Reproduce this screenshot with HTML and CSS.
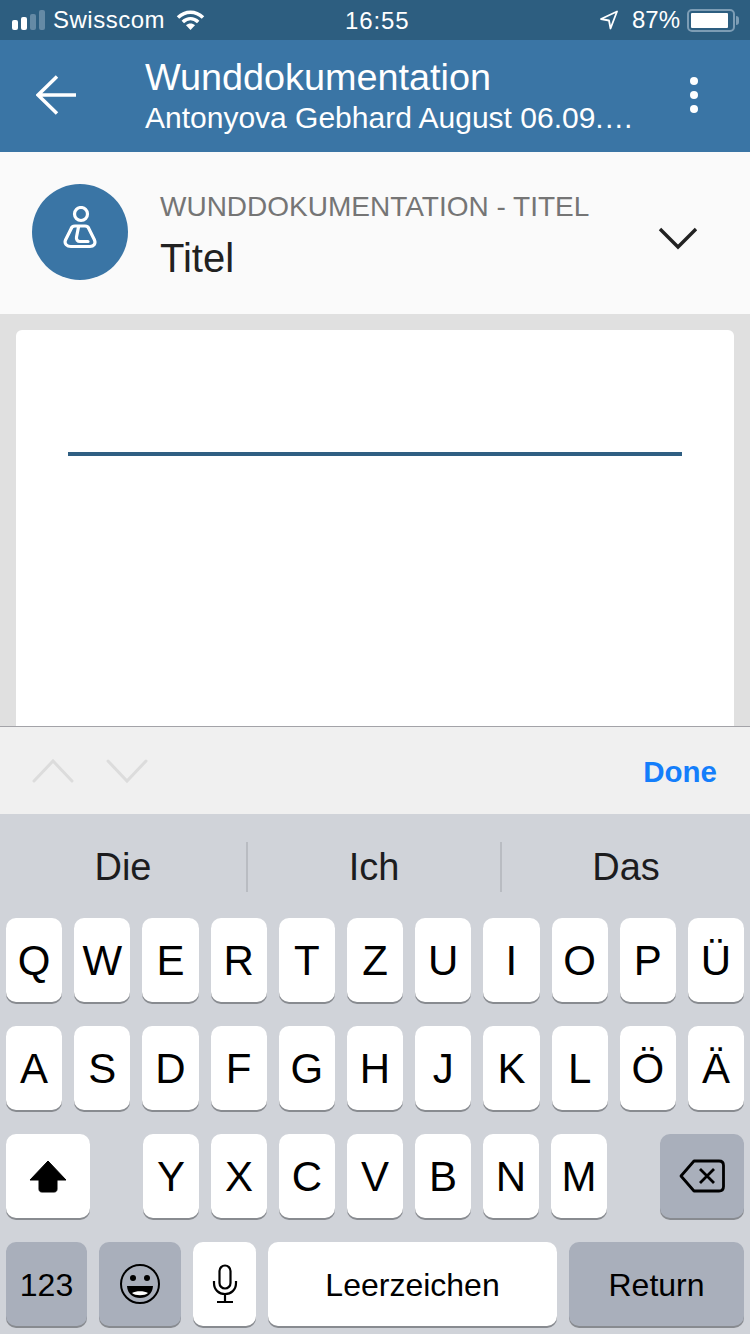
FILE: index.html
```html
<!DOCTYPE html>
<html lang="de">
<head>
    <meta charset="UTF-8">
    <meta name="viewport" content="width=device-width, initial-scale=1.0">
    <title>Wunddokumentation</title>
    <link rel="stylesheet" href="styles.css">
</head>
<body>
    <div class="status-bar">
        <div class="status-left">
            <div class="signal">
                <span class="bar bar-1 on"></span>
                <span class="bar bar-2 on"></span>
                <span class="bar bar-3"></span>
                <span class="bar bar-4"></span>
            </div>
            <span class="carrier">Swisscom</span>
            <svg class="wifi" width="29" height="22" viewBox="0 0 29 22">
                <path d="M2 8.500C9.500 1.500 19.500 1.500 27 8.500" fill="none" stroke="#fff" stroke-width="3.600"/>
                <path d="M6.800 13C11.500 8.700 17.500 8.700 22.200 13" fill="none" stroke="#fff" stroke-width="3.600"/>
                <path d="M10 16.300C12.500 14 16.500 14 19 16.300L14.500 21Z" fill="#fff"/>
            </svg>
        </div>
        <div class="status-time">16:55</div>
        <div class="status-right">
            <svg class="location" width="18" height="20" viewBox="0 0 18 20">
                <path d="M1 9L17 1.500L10.500 18.500L9 10.500Z" fill="none" stroke="#fff" stroke-width="1.800" stroke-linejoin="round"/>
            </svg>
            <span class="battery-text">87%</span>
            <div class="battery"><div class="battery-level"></div></div>
            <div class="battery-tip"></div>
        </div>
    </div>

    <header class="app-bar">
        <svg class="back" width="42" height="40" viewBox="0 0 42 40">
            <path d="M2 20H40M21 1.500L2 20L21 38.500" fill="none" stroke="#fff" stroke-width="3.500"/>
        </svg>
        <div class="app-titles">
            <div class="app-title">Wunddokumentation</div>
            <div class="app-subtitle">Antonyova Gebhard August 06.09.…</div>
        </div>
        <div class="more">
            <span class="dot"></span>
            <span class="dot"></span>
            <span class="dot"></span>
        </div>
    </header>

    <section class="section-head">
        <div class="avatar">
            <svg class="avatar-icon" width="34" height="44" viewBox="0 0 34 44">
                <circle cx="18" cy="8" r="6.500" fill="none" stroke="#fff" stroke-width="3.200"/>
                <path d="M12 20H22C24.500 20 25.500 21 26 23L31.500 34C33 38 30.500 40.500 27 40.500H8C4 40.500 1 38 2.500 34L8 23C8.500 21 9.500 20 12 20Z" fill="none" stroke="#fff" stroke-width="3.200" stroke-linejoin="round"/>
                <path d="M15.500 21L13.500 31C13 33.500 14.500 35.500 17 35.500H25" fill="none" stroke="#fff" stroke-width="3.200" stroke-linecap="round"/>
            </svg>
        </div>
        <div class="section-text">
            <div class="section-label">WUNDDOKUMENTATION - TITEL</div>
            <div class="section-value">Titel</div>
        </div>
        <svg class="chevron" width="40" height="24" viewBox="0 0 40 24">
            <path d="M2 3L20 21L38 3" fill="none" stroke="#222" stroke-width="3.400"/>
        </svg>
    </section>

    <main class="content">
        <div class="card">
            <div class="field-line"></div>
        </div>
    </main>

    <div class="toolbar">
        <svg class="nav-arrow" width="42" height="26" viewBox="0 0 42 26">
            <path d="M2 23L21 3L40 23" fill="none" stroke="#dcdcdc" stroke-width="3" stroke-linecap="round"/>
        </svg>
        <svg class="nav-arrow" width="42" height="26" viewBox="0 0 42 26">
            <path d="M2 3L21 23L40 3" fill="none" stroke="#dcdcdc" stroke-width="3" stroke-linecap="round"/>
        </svg>
        <span class="done">Done</span>
    </div>

    <div class="keyboard">
        <div class="suggestions">
            <span class="suggestion suggestion-first">Die</span>
            <span class="suggestion suggestion-mid">Ich</span>
            <span class="suggestion">Das</span>
        </div>
        <div class="key-row">
            <div class="key">Q</div><div class="key">W</div><div class="key">E</div><div class="key">R</div><div class="key">T</div><div class="key">Z</div><div class="key">U</div><div class="key">I</div><div class="key">O</div><div class="key">P</div><div class="key">Ü</div>
        </div>
        <div class="key-row">
            <div class="key">A</div><div class="key">S</div><div class="key">D</div><div class="key">F</div><div class="key">G</div><div class="key">H</div><div class="key">J</div><div class="key">K</div><div class="key">L</div><div class="key">Ö</div><div class="key">Ä</div>
        </div>
        <div class="key-row row-3">
            <div class="key key-shift">
                <svg width="38" height="33" viewBox="0 0 38 33">
                    <path d="M19 1L37 20H28V29C28 31 27 32 25 32H13C11 32 10 31 10 29V20H1Z" fill="#000" stroke="#000" stroke-linejoin="round"/>
                </svg>
            </div>
            <div class="letters">
                <div class="key">Y</div><div class="key">X</div><div class="key">C</div><div class="key">V</div><div class="key">B</div><div class="key">N</div><div class="key">M</div>
            </div>
            <div class="key key-dark key-back">
                <svg width="46" height="34" viewBox="0 0 46 34">
                    <path d="M15 2H40C43 2 44.500 3.500 44.500 6.500V27.500C44.500 30.500 43 32 40 32H15L2 17Z" fill="none" stroke="#000" stroke-width="2.800" stroke-linejoin="round"/>
                    <path d="M21 10L35 24M35 10L21 24" fill="none" stroke="#000" stroke-width="2.800"/>
                </svg>
            </div>
        </div>
        <div class="key-row row-4">
            <div class="key key-dark key-num">123</div>
            <div class="key key-dark key-emoji">
                <svg width="42" height="42" viewBox="0 0 42 42">
                    <circle cx="21" cy="21" r="19" fill="none" stroke="#000" stroke-width="2"/>
                    <circle cx="14" cy="15" r="3" fill="#000"/>
                    <circle cx="28" cy="15" r="3" fill="#000"/>
                    <path d="M8 23H34C33.500 31 28 35 21 35C14 35 8.500 31 8 23Z" fill="#000"/>
                    <path d="M13 30C17 27.500 25 27.500 29 30C26 33 16 33 13 30Z" fill="#fff"/>
                </svg>
            </div>
            <div class="key key-mic">
                <svg width="26" height="40" viewBox="0 0 26 40">
                    <rect x="7.500" y="1.500" width="11" height="23" rx="5.500" fill="none" stroke="#000" stroke-width="2.200"/>
                    <path d="M2 17V19C2 26 7 30 13 30C19 30 24 26 24 19V17M13 30V37M5 38H21" fill="none" stroke="#000" stroke-width="2.200"/>
                </svg>
            </div>
            <div class="key key-space">Leerzeichen</div>
            <div class="key key-dark key-return">Return</div>
        </div>
    </div>
</body>
</html>
```

FILE: styles.css
```css
* {
    margin: 0;
    padding: 0;
    box-sizing: border-box;
    font-family: "Liberation Sans", Arial, sans-serif;
}

body {
    width: 750px;
    height: 1334px;
    overflow: hidden;
    background-color: #e0e0e0;
    display: flex;
    flex-direction: column;
}

.status-bar {
    height: 40px;
    flex-shrink: 0;
    background-color: #2d5e80;
    color: white;
    display: flex;
    align-items: center;
    justify-content: space-between;
    padding: 0 11px 0 12px;
    position: relative;
    font-size: 24px;
}

.status-left,
.status-right {
    display: flex;
    align-items: center;
}

.signal {
    display: flex;
    align-items: flex-end;
    gap: 3px;
    height: 20px;
}

.bar {
    width: 6px;
    border-radius: 2px;
    background-color: #658aa5;
}

.bar.on {
    background-color: white;
}

.bar-1 { height: 10px; }
.bar-2 { height: 13px; }
.bar-3 { height: 16px; }
.bar-4 { height: 20px; }

.carrier {
    margin-left: 8px;
    letter-spacing: 0.5px;
}

.wifi {
    margin-left: 11px;
}

.status-time {
    position: absolute;
    left: 345px;
    top: 7px;
    letter-spacing: 0.9px;
}

.location {
    margin-right: 14px;
}

.battery-text {
    margin-right: 7px;
}

.battery {
    width: 48px;
    height: 23px;
    border: 2px solid #7d9db5;
    border-radius: 5px;
    padding: 2px;
}

.battery-level {
    width: 37px;
    height: 15px;
    background-color: white;
    border-radius: 1px;
}

.battery-tip {
    width: 3px;
    height: 9px;
    margin-left: 1px;
    background-color: #7d9db5;
    border-radius: 0 3px 3px 0;
}

.app-bar {
    height: 112px;
    flex-shrink: 0;
    background-color: #3a75a5;
    color: white;
    display: flex;
    align-items: center;
    padding-left: 36px;
    position: relative;
}

.back {
    margin-top: -2px;
}

.app-titles {
    margin-left: 67px;
    width: 509px;
}

.app-title {
    font-size: 37.800px;
    line-height: 42px;
    margin-bottom: 2px;
}

.app-subtitle {
    font-size: 30px;
    line-height: 36px;
    white-space: nowrap;
}

.more {
    margin-left: 36px;
    display: flex;
    flex-direction: column;
    gap: 6px;
    margin-top: -2px;
}

.dot {
    width: 8px;
    height: 8px;
    border-radius: 50%;
    background-color: white;
}

.section-head {
    height: 162px;
    flex-shrink: 0;
    background-color: #fafafa;
    display: flex;
    align-items: center;
    padding-left: 32px;
}

.avatar {
    width: 96px;
    height: 96px;
    margin-top: -2px;
    border-radius: 50%;
    background-color: #3a75a5;
    display: flex;
    align-items: center;
    justify-content: center;
}

.avatar-icon {
    margin-bottom: 8px;
}

.section-text {
    margin-left: 32px;
    width: 498px;
    padding-top: 4px;
}

.section-label {
    font-size: 28px;
    line-height: 32px;
    color: #757575;
}

.section-value {
    font-size: 40px;
    line-height: 44px;
    margin-top: 13px;
    color: #212121;
}

.chevron {
    margin-top: 10px;
}

.content {
    flex: 1;
    min-height: 0;
    overflow: hidden;
    padding: 16px 16px 0;
}

.card {
    height: 500px;
    background-color: white;
    border-radius: 6px;
    padding: 122px 52px 0;
}

.field-line {
    height: 4px;
    background-color: #2f5f82;
}

.toolbar {
    height: 88px;
    flex-shrink: 0;
    background-color: #f0f0f0;
    border-top: 1px solid #a3a3a8;
    display: flex;
    align-items: center;
    gap: 32px;
    padding: 0 33px 0 32px;
}

.done {
    margin-left: auto;
    color: #147efb;
    font-size: 29.500px;
    font-weight: 700;
    margin-top: 2px;
}

.keyboard {
    height: 520px;
    flex-shrink: 0;
    background-color: #d0d3d9;
    padding: 0 6px;
}

.suggestions {
    height: 104px;
    display: flex;
    margin: 0 -6px;
}

.suggestion {
    flex: 1;
    margin-top: 28px;
    height: 50px;
    font-size: 38px;
    line-height: 50px;
    text-align: center;
    color: #1c1c1e;
}

.suggestion-first {
    flex: none;
    width: 246px;
}

.suggestion-mid {
    flex: none;
    width: 254px;
}

.suggestion + .suggestion {
    border-left: 2px solid #b9bcc2;
}

.key-row {
    display: flex;
    gap: 12px;
    margin-bottom: 24px;
}

.key {
    flex: 1;
    height: 84px;
    padding-top: 2px;
    background-color: white;
    border-radius: 10px;
    box-shadow: 0 2px 0 #888b90;
    display: flex;
    align-items: center;
    justify-content: center;
    font-size: 42px;
    color: #000;
}

.key-dark {
    background-color: #a9afbb;
}

.key-shift,
.key-back,
.key-emoji,
.key-mic {
    padding-top: 0;
}

.letters {
    display: flex;
    gap: 12px;
    width: 464px;
}

.row-3 {
    justify-content: space-between;
    gap: 0;
}

.key-shift,
.key-back {
    flex: none;
    width: 84px;
}

.row-4 .key {
    flex: none;
    font-size: 32px;
}

.key-num { width: 81px; }
.key-emoji { width: 82px; }
.key-mic { width: 63px; }
.key-space { width: 289px; }
.key-return { width: 175px; }
```
